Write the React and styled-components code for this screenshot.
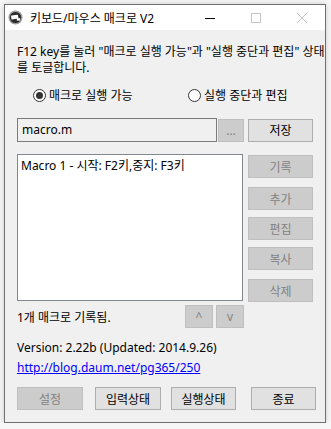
import React from "react";
import styled, { createGlobalStyle } from "styled-components";

const FONT = `"Segoe UI", "Noto Sans", "Noto Sans CJK KR", sans-serif`;

const GlobalStyle = createGlobalStyle`
  html, body {
    margin: 0;
    background: #f7f7f7;
  }
  body {
    font-family: ${FONT};
    font-size: 12px;
    color: #000;
  }
`;

const Page = styled.div`
  padding: 4px 0 0 4px;
`;

const Window = styled.div`
  width: 320px;
  height: 417px;
  border: 1px solid #6f6f6f;
  background: #f0f0f0;
  box-shadow: 0 0 6px rgba(0, 0, 0, 0.18);
  display: flex;
  flex-direction: column;
`;

const TitleBar = styled.div`
  height: 25px;
  background: #fff;
  display: flex;
  align-items: center;
  padding-left: 3px;
`;

const Title = styled.span`
  margin-left: 7px;
  font-size: 12px;
  flex: 1;
  white-space: nowrap;
`;

const WinButton = styled.div`
  width: 46px;
  height: 25px;
  display: flex;
  align-items: center;
  justify-content: center;
`;

const Body = styled.div`
  flex: 1;
  padding: 14px 12px 0 12px;
  display: flex;
  flex-direction: column;
`;

const Intro = styled.p`
  margin: 0;
  line-height: 16px;
  white-space: nowrap;
`;

const RadioRow = styled.div`
  margin-top: 11px;
  padding-left: 16px;
  display: flex;
  height: 16px;
  align-items: center;
`;

const RadioLabel = styled.label`
  display: flex;
  align-items: center;
  gap: 3px;
  width: ${(p) => (p.$w ? `${p.$w}px` : "auto")};
  white-space: nowrap;
`;

const RadioDot = styled.span`
  width: 11px;
  height: 11px;
  border: 1px solid #333;
  border-radius: 50%;
  background: #fff;
  display: flex;
  align-items: center;
  justify-content: center;
  &::after {
    content: "";
    width: 7px;
    height: 7px;
    border-radius: 50%;
    background: ${(p) => (p.$checked ? "#333" : "transparent")};
  }
`;

const FileRow = styled.div`
  margin-top: 15px;
  display: flex;
  align-items: center;
  height: 24px;
`;

const FileField = styled.div`
  width: 194px;
  height: 22px;
  border: 1px solid #7a7a7a;
  background: #f0f0f0;
  padding-left: 4px;
  display: flex;
  align-items: center;
  line-height: 16px;
`;

const Button = styled.div`
  width: ${(p) => p.$w || 63}px;
  height: 21px;
  margin-left: ${(p) => p.$ml || 0}px;
  margin-top: ${(p) => p.$mt || 0}px;
  border: 1px solid ${(p) => (p.$disabled ? "#bfbfbf" : "#adadad")};
  background: ${(p) => (p.$disabled ? "#cccccc" : "#e1e1e1")};
  color: ${(p) => (p.$disabled ? "#838383" : "#000")};
  display: flex;
  align-items: center;
  justify-content: center;
  flex-shrink: 0;
  white-space: nowrap;
  font-size: 12px;
`;

const MainRow = styled.div`
  margin-top: 12px;
  display: flex;
  align-items: flex-start;
`;

const ListBox = styled.div`
  box-sizing: border-box;
  width: 226px;
  height: 147px;
  border: 1px solid #828790;
  background: #fff;
  padding: 3px 0 0 3px;
  line-height: 16px;
  white-space: nowrap;
`;

const SideColumn = styled.div`
  margin-left: 5px;
  display: flex;
  flex-direction: column;
  padding-top: 1px;
`;

const StatusRow = styled.div`
  margin-top: 3px;
  display: flex;
  align-items: center;
  height: 23px;
`;

const StatusText = styled.span`
  width: 168px;
  padding-top: 1px;
  white-space: nowrap;
`;

const InfoLine = styled.div`
  margin-top: ${(p) => p.$mt}px;
  line-height: 16px;
  white-space: nowrap;
`;

const Link = styled.a`
  color: #0000ff;
  text-decoration: underline;
`;

const BottomRow = styled.div`
  margin-top: 11px;
  display: flex;
`;

const AppIcon = () => (
  <svg width="15" height="15" viewBox="0 0 15 15">
    <circle cx="7.5" cy="7.5" r="7" fill="#9a9a9a" />
    <circle cx="7.5" cy="7.5" r="5.6" fill="#2b2b2b" />
    <rect x="3.2" y="5" width="7" height="4" rx="0.6" fill="#fff" transform="rotate(-8 7 7)" />
    <rect x="8.8" y="8.2" width="3.4" height="2.4" fill="#fff" />
  </svg>
);

export default function App() {
  return (
    <Page>
      <GlobalStyle />
      <Window>
        <TitleBar>
          <AppIcon />
          <Title>키보드/마우스 매크로 V2</Title>
          <WinButton>
            <svg width="10" height="10" viewBox="0 0 10 10">
              <line x1="0" y1="5.5" x2="10" y2="5.5" stroke="#000" strokeWidth="1" />
            </svg>
          </WinButton>
          <WinButton>
            <svg width="10" height="10" viewBox="0 0 10 10">
              <rect x="0.5" y="0.5" width="9" height="9" fill="none" stroke="#c4c4c4" strokeWidth="1" />
            </svg>
          </WinButton>
          <WinButton>
            <svg width="10" height="10" viewBox="0 0 10 10">
              <path d="M0 0 L10 10 M10 0 L0 10" stroke="#c4c4c4" strokeWidth="1" />
            </svg>
          </WinButton>
        </TitleBar>
        <Body>
          <Intro>
            F12 key를 눌러 "매크로 실행 가능"과 "실행 중단과 편집" 상태
            <br />를 토글합니다.
          </Intro>
          <RadioRow>
            <RadioLabel $w={155}>
              <RadioDot $checked />
              매크로 실행 가능
            </RadioLabel>
            <RadioLabel>
              <RadioDot />
              실행 중단과 편집
            </RadioLabel>
          </RadioRow>
          <FileRow>
            <FileField>macro.m</FileField>
            <Button $w={24} $ml={1} $disabled>
              ...
            </Button>
            <Button $ml={4}>저장</Button>
          </FileRow>
          <MainRow>
            <ListBox>Macro 1 - 시작: F2키,중지: F3키</ListBox>
            <SideColumn>
              <Button $disabled>기록</Button>
              <Button $disabled $mt={9}>추가</Button>
              <Button $disabled $mt={7}>편집</Button>
              <Button $disabled $mt={7}>복사</Button>
              <Button $disabled $mt={9}>삭제</Button>
            </SideColumn>
          </MainRow>
          <StatusRow>
            <StatusText>1개 매크로 기록됨.</StatusText>
            <Button $w={26} $disabled>^</Button>
            <Button $w={26} $ml={3} $disabled>v</Button>
          </StatusRow>
          <InfoLine $mt={12}>Version: 2.22b (Updated: 2014.9.26)</InfoLine>
          <InfoLine $mt={4}>
            <Link href="#">http://blog.daum.net/pg365/250</Link>
          </InfoLine>
          <BottomRow>
            <Button $w={64} $disabled>설정</Button>
            <Button $w={64} $ml={12}>입력상태</Button>
            <Button $w={63} $ml={10}>실행상태</Button>
            <Button $w={63} $ml={15}>종료</Button>
          </BottomRow>
        </Body>
      </Window>
    </Page>
  );
}
